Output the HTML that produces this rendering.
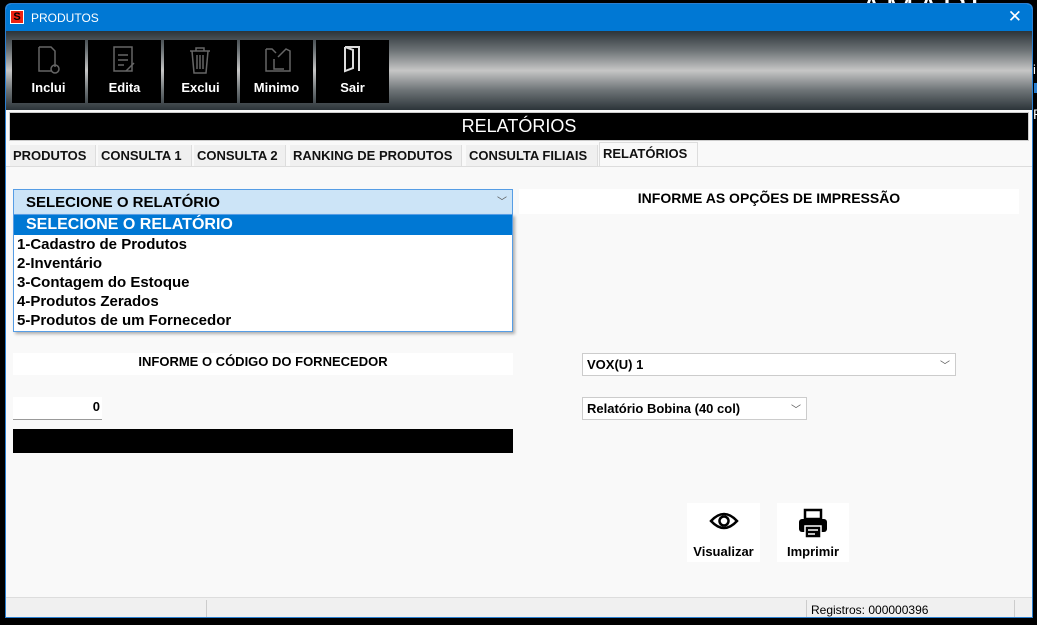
<!DOCTYPE html><html><head><style>
*{box-sizing:border-box;margin:0;padding:0}
body{width:1037px;height:625px;background:#000;position:relative;overflow:hidden;font-family:"Liberation Sans",sans-serif}
.a{position:absolute}
.win{left:5px;top:3px;width:1028px;height:615px;background:#f9f9f9;border:1px solid #2b7fd0;border-radius:6px 6px 0 0;overflow:hidden}
.tb{left:0;top:0;width:100%;height:27px;background:#0078d4;color:#fff;font-size:12px}
.tool{left:0;top:27px;width:100%;height:79px;background:linear-gradient(#2c3439,#6e7477 25%,#c6c6c6 50%,#6e7477 75%,#2c3439)}
.btn{top:9px;width:73px;height:63px;background:#000;color:#fff;font-weight:bold;font-size:13px;text-align:center}
.btn span{position:absolute;left:0;right:0;top:40px}
.btn svg{position:absolute;left:24px;top:5px}
.tabs{top:141px;left:0;height:22px;font-size:13px;font-weight:bold;color:#111}
.tab{top:0;height:22px;line-height:22px;padding:0 3px;border-right:1px solid #ddd;background:#f0f0f0}
.dd{font-weight:bold;font-size:15px;color:#000}
</style></head><body>
<div class="a" style="left:860px;top:-10px;color:#fff;font-size:34px;letter-spacing:3px">AMARE</div>
<div class="a" style="left:1033px;top:62px;color:#fff;font-size:13px">i</div>
<div class="a" style="left:1034px;top:83px;width:3px;height:10px;background:#2b7fd0"></div>
<div class="a" style="left:1033px;top:106px;color:#fff;font-size:14px">P</div>
<div class="a win">
 <div class="a tb"><div class="a" style="left:4px;top:6px;width:14px;height:14px;background:#e21;border:1px solid #fff;color:#000;font-size:11px;font-weight:bold;text-align:center;line-height:12px">S</div><div class="a" style="left:25px;top:7px">PRODUTOS</div><div class="a" style="right:10px;top:3px;font-size:17px">✕</div></div>
 <div class="a tool">
  <div class="a btn" style="left:6px"><svg width="26" height="30" fill="none" stroke="#666" stroke-width="1.5"><path d="M3 2h12l4 4v16M3 2v24h12"/><circle cx="19" cy="24" r="4"/></svg><span>Inclui</span></div>
  <div class="a btn" style="left:82px"><svg width="28" height="30" fill="none" stroke="#666" stroke-width="1.5"><rect x="2" y="2" width="18" height="24"/><path d="M6 10h10M6 15h10M6 20h6M14 26l8-8"/></svg><span>Edita</span></div>
  <div class="a btn" style="left:158px"><svg width="26" height="30" fill="none" stroke="#666" stroke-width="1.5"><path d="M2 6h20M8 6V3h8v3M4 6l2 22h12l2-22M9 10v14M12 10v14M15 10v14"/></svg><span>Exclui</span></div>
  <div class="a btn" style="left:234px"><svg width="30" height="30" fill="none" stroke="#666" stroke-width="1.5"><path d="M2 4h6l4 4M2 4v22h24V6l-4-2-8 8M10 14v10h10"/></svg><span>Minimo</span></div>
  <div class="a btn" style="left:310px"><svg width="26" height="30" fill="none" stroke="#ddd" stroke-width="2"><path d="M5 2h14v24M5 2v24l8-3V5L5 2"/></svg><span>Sair</span></div>
 </div>
 <div class="a" style="left:3px;top:108px;width:1020px;height:29px;background:#000;border:1px solid #ccc;color:#fff;font-size:18px;text-align:center;line-height:27px">RELATÓRIOS</div>
 <div class="a tabs">
  <div class="a tab" style="left:4px;width:86px">PRODUTOS</div>
  <div class="a tab" style="left:92px;width:94px">CONSULTA 1</div>
  <div class="a tab" style="left:188px;width:92px">CONSULTA 2</div>
  <div class="a tab" style="left:284px;width:172px">RANKING DE PRODUTOS</div>
  <div class="a tab" style="left:460px;width:132px">CONSULTA FILIAIS</div>
  <div class="a tab" style="left:593px;top:-3px;height:25px;width:99px;background:#f9f9f9;border:1px solid #ddd;border-bottom:none">RELATÓRIOS</div>
 </div>
 <div class="a" style="left:0;top:162px;width:100%;height:1px;background:#ddd"></div>
 <div class="a dd" style="left:7px;top:185px;width:500px;height:26px;background:#cce4f7;border:1px solid #569de5;padding:4px 0 0 12px">SELECIONE O RELATÓRIO<span class="a" style="right:5px;top:3px;font-size:10px;color:#555;font-weight:normal">﹀</span></div>
 <div class="a dd" style="left:7px;top:210px;width:500px;height:118px;background:#fff;border:1px solid #569de5;box-shadow:2px 2px 3px rgba(0,0,0,.3);line-height:19px">
  <div style="background:#0078d4;color:#fff;padding-left:12px;height:20px;font-size:16px">SELECIONE O RELATÓRIO</div>
  <div style="padding-left:3px">1-Cadastro de Produtos</div><div style="padding-left:3px">2-Inventário</div><div style="padding-left:3px">3-Contagem do Estoque</div><div style="padding-left:3px">4-Produtos Zerados</div><div style="padding-left:3px">5-Produtos de um Fornecedor</div>
 </div>
 <div class="a" style="left:7px;top:349px;width:500px;height:22px;background:#fff;text-align:center;font-size:13px;font-weight:bold;line-height:18px">INFORME O CÓDIGO DO FORNECEDOR</div>
 <div class="a" style="left:7px;top:393px;width:89px;height:23px;background:#fff;border-bottom:1px solid #999;text-align:right;padding-right:2px;font-size:13px;font-weight:bold;line-height:20px">0</div>
 <div class="a" style="left:7px;top:425px;width:500px;height:24px;background:#000"></div>
 <div class="a" style="left:513px;top:185px;width:500px;height:25px;background:#fff;text-align:center;font-size:14px;font-weight:bold;line-height:18px">INFORME AS OPÇÕES DE IMPRESSÃO</div>
 <div class="a" style="left:576px;top:349px;width:374px;height:23px;background:#fff;border:1px solid #ccc;font-size:13px;font-weight:bold;padding:3px 4px">VOX(U) 1<span class="a" style="right:5px;top:3px;font-size:10px;color:#555;font-weight:normal">﹀</span></div>
 <div class="a" style="left:576px;top:393px;width:225px;height:23px;background:#fff;border:1px solid #ccc;font-size:13px;font-weight:bold;padding:3px 4px">Relatório Bobina (40 col)<span class="a" style="right:5px;top:3px;font-size:10px;color:#555;font-weight:normal">﹀</span></div>
 <div class="a" style="left:681px;top:499px;width:73px;height:59px;background:#fff;font-size:13px;font-weight:bold;text-align:center"><svg class="a" style="left:22px;top:8px" width="30" height="20"><path d="M2 10Q15-4 28 10Q15 24 2 10Z" fill="none" stroke="#000" stroke-width="2.5"/><circle cx="15" cy="10" r="4.5" fill="none" stroke="#000" stroke-width="2.5"/></svg><span class="a" style="left:0;right:0;top:41px">Visualizar</span></div>
 <div class="a" style="left:771px;top:499px;width:72px;height:59px;background:#fff;font-size:13px;font-weight:bold;text-align:center"><svg class="a" style="left:20px;top:5px" width="32" height="32"><rect x="8" y="2" width="16" height="9" fill="none" stroke="#000" stroke-width="2.5"/><rect x="2" y="11" width="28" height="13" rx="3"/><rect x="8" y="18" width="16" height="12" fill="#000" stroke="#fff" stroke-width="1.5"/><path d="M11 22h10M11 26h7" stroke="#fff" stroke-width="1.5"/></svg><span class="a" style="left:0;right:0;top:41px">Imprimir</span></div>
 <div class="a" style="left:0;top:593px;width:100%;height:22px;background:#f0f0f0;border-top:1px solid #ddd;font-size:12px">
  <div class="a" style="left:200px;top:2px;width:1px;height:18px;background:#ccc"></div>
  <div class="a" style="left:800px;top:2px;width:1px;height:18px;background:#ccc"></div>
  <div class="a" style="left:1008px;top:2px;width:1px;height:18px;background:#ccc"></div>
  <div class="a" style="left:805px;top:5px">Registros: 000000396</div>
 </div>
</div>
</body></html>
